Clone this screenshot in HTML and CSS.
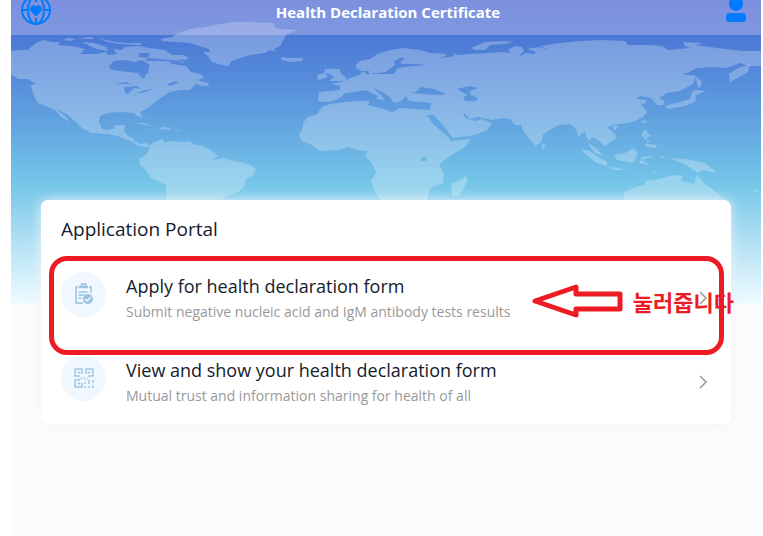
FILE: index.html
```html
<!DOCTYPE html>
<html lang="en">
<head>
    <meta charset="UTF-8">
    <meta name="viewport" content="width=device-width, initial-scale=1.0">
    <title>Health Declaration Certificate</title>
    <link rel="stylesheet" href="styles.css">
</head>
<body>
    <div class="page">
        <!-- World map banner -->
        <svg class="world-map" viewBox="11 0 750 305" preserveAspectRatio="none" aria-hidden="true">
            <g fill="#fff" fill-opacity=".26" fill-rule="evenodd">
                <!-- North America -->
                <path d="M11 51L20 50 28 50 31 47 36 43 44 40 52 42 60 42 58 45 72 46 85 49 80 54 95 54 106 52 108 55 117 54 113 49 122 50 125 47 140 46 148 48 165 50 172 55 183 55 189 58 185 60 178 59 184 63 170 62 172 64 186 66 191 72 200 74 204 78 197 80 208 83 209 86 202 86 196 84 190 90 180 90 170 92 162 97 154 103 148 108 140 112 143 118 137 116 134 113 120 112 108 113 100 116 99 122 102 129 108 130 113 129 116 125 125 125 124 131 128 136 133 138 134 141 140 144 147 143 149 146 147 147 139 146 131 141 125 139 118 136 108 134 92 133 82 128 76 122 68 115 60 111 55 108 66 117 70 122 60 116 55 110 48 107 43 105 38 103 35 98 32 90 31 85 36 84 28 79 18 79 14 76 11 74Z
                    M109 66L114 61 125 60 135 62 142 60 150 65 148 70 149 73 146 74 144 79 141 77 138 73 128 72 118 71 110 69Z
                    M139 53L150 53 148 58 160 59 180 61 182 63 165 61 145 61 148 58 139 57Z
                    M115 84L125 82 132 84Z M124 87L137 86 141 89 134 88 128 94 125 93Z M137 93L145 90 153 89 143 93Z M167 84L176 81 178 83 170 86Z"/>
                <path d="M62 40L68 38 76 39 70 41ZM80 38L92 37 94 39 84 39ZM98 38L110 41 116 42 128 43 142 43 140 45 120 44 108 42ZM82 42L94 43 106 47 108 51 96 49Z"/>
                <path d="M132 123L145 123 154 127 146 125ZM158 129L163 127 170 128 171 130ZM146 119L150 120 147 120ZM147 131L151 131 149 132ZM175 130L179 130 177 131Z"/>
                <!-- South America -->
                <path d="M149 146L153 143 162 139 165 143 170 141 185 142 190 141 195 145 200 145 209 149 218 156 211 160 224 158 233 161 245 163 254 167 256 170 252 176 246 179 244 187 238 192 225 196 220 202 167 202 166 185 158 181 151 178 146 170 140 165 139 159 146 155 149 150Z"/>
                <!-- Greenland and Iceland -->
                <path d="M161 39L172 37 178 33 190 29 205 27 220 24 235 22 250 22 273 23 275 28 282 29 297 30 290 33 286 35 285 38 283 41 280 46 274 49 276 52 270 50 265 53 250 55 240 58 232 61 228 66 222 65 212 62 208 56 203 52 210 52 209 49 199 46 190 43 175 42 162 41ZM281 57L290 58 303 58 302 61 290 62 282 60Z"/>
                <!-- British Isles -->
                <path d="M325 69L340 69 341 73 347 79 345 81 329 81 334 77 330 74 324 73ZM317 75L324 73 328 76 326 78 318 80Z"/>
                <!-- Europe, Asia and Africa -->
                <path d="M356 65L360 61 370 59 378 54 390 50 403 48 420 50 430 53 445 54 446 56 437 59 455 56 452 53 457 55 470 54 490 53 503 52 511 53 508 50 515 46 522 47 524 51 518 57 526 53 534 54 536 52 527 49 540 47 550 51 541 46 560 43 580 41 600 40 625 41 628 45 650 45 662 46 668 50 690 48 685 46 683 42 703 43 696 45 710 47 725 49 743 51 761 51 761 66 748 66 740 63 726 68 712 67 697 68 687 73 681 74 696 76 693 84 680 91 667 93 659 98 665 101 663 105 657 105 651 98 645 97 640 96 636 99 646 100 646 103 641 104 647 112 643 117 633 122 620 124 613 125 607 127 615 134 617 138 609 143 605 146 598 140 592 137 589 141 586 136 585 131 578 137 576 129 570 124 558 125 550 130 543 134 542 140 536 146 530 140 524 132 521 125 515 125 510 119 503 118 492 120 478 117 470 119 463 112 465 118 475 121 482 119 492 123 487 130 475 135 460 137 453 138 447 130 440 122 433 115 427 115 433 124 441 131 449 138 451 141 460 140 471 139 465 147 453 154 444 160 439 165 444 173 443 183 430 188 427 202 382 202 374 190 371 181 376 173 372 163 365 156 368 151 357 150 348 147 340 150 320 151 310 144 302 141 299 135 303 127 303 123 308 117 317 114 322 107 330 104 345 102 360 101 370 101 368 105 380 108 393 112 400 108 415 109 430 110 431 103 420 102 409 101 406 96 400 102 394 103 390 97 382 92 373 88 380 94 385 100 376 99 378 96 372 93 366 90 355 92 345 93 340 98 333 101 325 102 318 101 319 92 330 91 340 90 340 86 331 84 345 81 350 78 360 75 362 71 369 71 369 75 362 71 356 68Z
                    M369 74L385 72 391 68 395 65 394 61 400 58 405 58 400 62 402 64 418 64 425 65 405 67 398 68 394 74Z
                    M411 93L417 91 421 87 427 88 434 89 446 94 440 95 425 94Z
                    M457 89L465 87 470 86 478 88 470 91 471 95 478 98 476 101 465 101 463 98 467 95Z
                    M421 158L427 157 426 161 421 161Z"/>
                <path d="M451 183L460 180 466 176 468 180 460 195 452 196Z"/>
                <path d="M471 48L485 42 503 41 513 42 505 44 490 45 485 50 475 50Z"/>
                <!-- East Asia and Pacific islands -->
                <path d="M730 82L729 74 740 67 750 65 748 72ZM696 76L702 82 700 88 697 85ZM665 106L680 102 690 99 692 92 696 90 706 91 696 95 695 102 685 106 668 109ZM641 121L647 120 643 124ZM612 126L618 126 615 131ZM541 143L546 145 543 150ZM641 134L646 129 648 134 651 135 645 140ZM646 144L657 145 655 148 645 146ZM646 141L650 140 648 143Z"/>
                <path d="M580 149L590 151 600 158 607 162 607 166 595 162ZM587 142L597 149 603 156 595 153ZM607 166L628 170 615 170ZM614 155L625 153 634 148 638 153 633 163 617 160ZM641 157L655 156 641 160 650 165 639 163 641 160ZM661 157L665 155 662 159ZM669 158L685 159 705 163 717 173 703 170 698 173 686 165ZM651 172L659 171 653 173Z"/>
                <!-- Australia -->
                <path d="M623 193L635 187 645 185 645 181 660 179 672 175 683 176 681 181 694 184 697 175 706 185 711 188 727 202 626 202ZM753 190L758 190 758 192Z"/>
            </g>
        </svg>

        <header class="header">
            <button class="header-button" type="button" aria-label="Language">
                <svg width="30" height="30" viewBox="0 0 30 30" fill="none" stroke="#007aff" stroke-width="2">
                    <circle cx="15" cy="15" r="14"/>
                    <ellipse cx="15" cy="15" rx="8" ry="14"/>
                    <path d="M1 15h6M23 15h6M15 1v6M15 23v6"/>
                    <path d="M15 21l-5-5c-2-4 3-7 5-4 2-3 7 0 5 4z" fill="#007aff" stroke="#007aff" stroke-width="1"/>
                </svg>
            </button>
            <h1 class="header-title">Health Declaration Certificate</h1>
            <button class="header-button" type="button" aria-label="Profile">
                <svg width="22" height="24" viewBox="0 0 22 24" fill="#007aff">
                    <rect x="4" y="-2" width="14" height="15" rx="7"/>
                    <rect x="1" y="15" width="20" height="9" rx="4"/>
                </svg>
            </button>
        </header>

        <main class="card">
            <h2 class="card-title">Application Portal</h2>
            <ul class="portal-list">
                <li class="portal-item">
                    <a class="portal-link" href="#apply">
                        <span class="portal-icon">
                            <svg width="20" height="22" viewBox="0 0 20 22" fill="none" stroke="#96c3e2" stroke-width="1.5">
                                <path d="M4 4H2v16h7M15 4h2v6"/>
                                <path d="M5 4h9" stroke-width="2.5"/>
                                <path d="M7.500 3V1h4v2M4.500 9h9M4.500 12h6M4.500 15h3"/>
                                <circle cx="14" cy="16" r="5" fill="#96c3e2" stroke="none"/>
                                <path d="M11 16l2 2 4-4" stroke="#f0f7ff"/>
                            </svg>
                        </span>
                        <span class="portal-text">
                            <span class="portal-name">Apply for health declaration form</span>
                            <span class="portal-desc">Submit negative nucleic acid and IgM antibody tests results</span>
                        </span>
                        <svg class="chevron" width="10" height="14" viewBox="0 0 10 14" fill="none" stroke="#999" stroke-width="1.5">
                            <path d="M2 1l6 6-6 6"/>
                        </svg>
                    </a>
                    <!-- Marker over the first entry -->
                    <div class="marker"></div>
                    <div class="marker-note">
                        <svg width="92" height="36" viewBox="0 0 92 36" fill="none" stroke="#ed1c24" stroke-width="5" stroke-linejoin="round">
                            <path d="M4 18L45 4v7h44v15H45v6z"/>
                        </svg>
                        <span lang="ko">눌러줍니다</span>
                    </div>
                </li>
                <li class="portal-item">
                    <a class="portal-link" href="#view">
                        <span class="portal-icon">
                            <svg width="20" height="20" viewBox="0 0 20 20" fill="none" stroke="#a0c9e6" stroke-width="1.5">
                                <path d="M8 6V1H1v7h5M12 6V1h7v7h-5M6 12H1v7h7v-4"/>
                                <path d="M4 4h2v1H4zM14 4h2v1h-2zM4 15h2v1H4z" stroke-width="1" fill="#a0c9e6"/>
                                <path d="M11 14v2M11 18v2M15 12v4M15 18v2M19 12v3M19 17v3"/>
                                <path d="M6 9v3M6 10h2M8 9v3M10 9v3h1V9zM15 9h-2v3h2" stroke-width=".5"/>
                            </svg>
                        </span>
                        <span class="portal-text">
                            <span class="portal-name">View and show your health declaration form</span>
                            <span class="portal-desc">Mutual trust and information sharing for health of all</span>
                        </span>
                        <svg class="chevron" width="10" height="14" viewBox="0 0 10 14" fill="none" stroke="#999" stroke-width="1.5">
                            <path d="M2 1l6 6-6 6"/>
                        </svg>
                    </a>
                </li>
            </ul>
        </main>
    </div>
</body>
</html>
```

FILE: styles.css
```css
* {
    box-sizing: border-box;
}

body {
    margin: 0;
    padding: 0 2px 0 11px;
    background-color: #fff;
    font-family: "Open Sans", "Noto Sans CJK KR", sans-serif;
    color: #14202b;
}

.page {
    position: relative;
    min-height: 100vh;
    background-color: #fcfcfc;
    overflow: hidden;
}

/* World map banner */
.world-map {
    position: absolute;
    top: 0;
    left: 0;
    width: 100%;
    height: 305px;
    background: linear-gradient(#4a6cd3 0, #4b78d5 36px, #5d9ade 106px, #74c5e8 182px, #b4e2f5 244px, #f0fbff 100%);
}

/* Header, partly scrolled out of view */
.header {
    position: relative;
    display: flex;
    align-items: center;
    justify-content: space-between;
    height: 46px;
    margin-top: -11px;
    padding: 0 14px 0 10px;
    background-color: rgba(220, 211, 243, 0.35);
}

.header-button {
    display: flex;
    padding: 0 0 4px;
    border: none;
    background: none;
    cursor: pointer;
}

.header-title {
    margin: 0;
    font-size: 15px;
    font-weight: 700;
    line-height: 24px;
    color: #fff;
}

/* Portal card */
.card {
    position: relative;
    margin: 165px 30px 0;
    padding: 14px 20px 4px;
    background-color: #fff;
    border-radius: 7px;
    box-shadow: 0 0 12px rgba(240, 243, 250, 0.9);
}

.card-title {
    margin: 0 0 8px;
    font-size: 19px;
    font-weight: 400;
    line-height: 30px;
}

.portal-list {
    margin: 0;
    padding: 0;
    list-style: none;
}

.portal-item {
    position: relative;
    height: 84px;
}

.portal-link {
    display: flex;
    align-items: center;
    gap: 20px;
    height: 84px;
    color: inherit;
    text-decoration: none;
}

.portal-icon {
    display: flex;
    align-items: center;
    justify-content: center;
    width: 45px;
    height: 45px;
    border-radius: 50%;
    background-color: #f0f7ff;
}

.portal-text {
    display: flex;
    flex: 1;
    flex-direction: column;
    gap: 2px;
    padding-top: 8px;
}

.portal-name {
    font-size: 18px;
    line-height: 26px;
}

.portal-desc {
    font-size: 14px;
    line-height: 22px;
    color: #999;
}

.chevron {
    margin: 8px 3px 0 0;
}

/* Red marker and note */
.marker {
    position: absolute;
    top: 4px;
    left: -12px;
    right: -13px;
    height: 99px;
    border: 5px solid #ed1c24;
    border-radius: 18px;
}

.marker-note {
    position: absolute;
    top: 31px;
    right: -23px;
    display: flex;
    align-items: center;
    gap: 10px;
    font-family: "Noto Sans CJK KR", sans-serif;
    font-size: 22px;
    font-weight: 700;
    line-height: 36px;
    color: #ed1c24;
    white-space: nowrap;
}
```
